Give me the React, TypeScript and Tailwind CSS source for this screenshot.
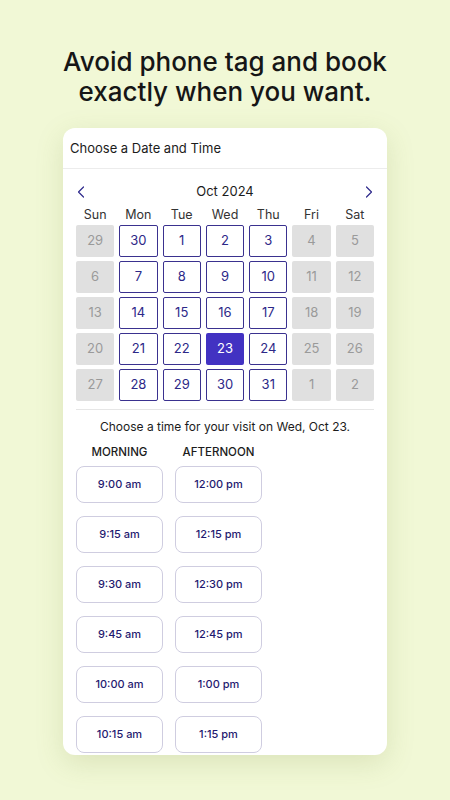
import React from 'react';

const weeks: { d: number; on: boolean }[][] = [
  [{ d: 29, on: false }, { d: 30, on: true }, { d: 1, on: true }, { d: 2, on: true }, { d: 3, on: true }, { d: 4, on: false }, { d: 5, on: false }],
  [{ d: 6, on: false }, { d: 7, on: true }, { d: 8, on: true }, { d: 9, on: true }, { d: 10, on: true }, { d: 11, on: false }, { d: 12, on: false }],
  [{ d: 13, on: false }, { d: 14, on: true }, { d: 15, on: true }, { d: 16, on: true }, { d: 17, on: true }, { d: 18, on: false }, { d: 19, on: false }],
  [{ d: 20, on: false }, { d: 21, on: true }, { d: 22, on: true }, { d: 23, on: true }, { d: 24, on: true }, { d: 25, on: false }, { d: 26, on: false }],
  [{ d: 27, on: false }, { d: 28, on: true }, { d: 29, on: true }, { d: 30, on: true }, { d: 31, on: true }, { d: 1, on: false }, { d: 2, on: false }],
];

const days = ['Sun', 'Mon', 'Tue', 'Wed', 'Thu', 'Fri', 'Sat'];

const slots: [string, string][] = [
  ['9:00 am', '12:00 pm'],
  ['9:15 am', '12:15 pm'],
  ['9:30 am', '12:30 pm'],
  ['9:45 am', '12:45 pm'],
  ['10:00 am', '1:00 pm'],
  ['10:15 am', '1:15 pm'],
];

function Chevron({ dir }: { dir: 'left' | 'right' }) {
  return (
    <svg width="8" height="12" viewBox="0 0 8 12" fill="none" className="text-[#2f2a8c]">
      <path
        d={dir === 'left' ? 'M6.5 1 L1.5 6 L6.5 11' : 'M1.5 1 L6.5 6 L1.5 11'}
        stroke="currentColor"
        strokeWidth="1.2"
        strokeLinecap="round"
        strokeLinejoin="round"
      />
    </svg>
  );
}

export default function App() {
  return (
    <div className="w-[450px] h-[800px] bg-[#f1f8d6] overflow-hidden font-['Inter',sans-serif]">
      {/* Headline */}
      <h1 className="pt-[47px] text-center text-[26px] leading-[30px] font-medium text-[#161616]">
        Avoid phone tag and book
        <br />
        exactly when you want.
      </h1>

      {/* Booking card */}
      <div className="mt-[21px] mx-[63px] bg-white rounded-[12px] shadow-[0_8px_28px_rgba(120,140,60,0.18)] overflow-hidden">
        <div className="h-[41px] flex items-center pt-[2px] px-[7px] border-b border-[#ececec]">
          <span className="text-[13px] text-[#1c1c1c]">Choose a Date and Time</span>
        </div>

        <div className="px-[13px]">
          {/* Month nav */}
          <div className="h-[22px] mt-[12px] flex items-center justify-between px-[1px]">
            <Chevron dir="left" />
            <span className="text-[13px] text-[#1c1c1c]">Oct 2024</span>
            <Chevron dir="right" />
          </div>

          {/* Day headers */}
          <div className="grid grid-cols-7 gap-x-[5px] h-[22px] mt-[1px] items-center">
            {days.map((d) => (
              <span key={d} className="text-center text-[12.5px] text-[#333]">
                {d}
              </span>
            ))}
          </div>

          {/* Dates */}
          <div className="flex flex-col gap-[4.5px] mt-[-1px]">
            {weeks.map((w, i) => (
              <div key={i} className="grid grid-cols-7 gap-x-[5px]">
                {w.map((c, j) => {
                  const selected = i === 3 && c.d === 23;
                  if (selected) {
                    return (
                      <div key={j} className="h-[31.5px] rounded-[2px] bg-[#4232c2] flex items-center justify-center text-[13px] text-white">
                        {c.d}
                      </div>
                    );
                  }
                  return c.on ? (
                    <div key={j} className="h-[31.5px] rounded-[2px] border border-[#3a318f] bg-white flex items-center justify-center text-[13px] text-[#2d2888]">
                      {c.d}
                    </div>
                  ) : (
                    <div key={j} className="h-[31.5px] rounded-[2px] bg-[#e0e0e0] flex items-center justify-center text-[13px] text-[#9a9a9a]">
                      {c.d}
                    </div>
                  );
                })}
              </div>
            ))}
          </div>

          <div className="mt-[8px] border-t border-[#e6e6e6]" />

          <p className="mt-[8px] text-center text-[12px] text-[#1c1c1c]">
            Choose a time for your visit on Wed, Oct 23.
          </p>

          {/* Time slots */}
          <div className="grid grid-cols-[87px_87px] gap-x-[12px] mt-[8px]">
            <span className="text-center text-[11.5px] font-medium text-[#1c1c1c]">MORNING</span>
            <span className="text-center text-[11.5px] font-medium text-[#1c1c1c]">AFTERNOON</span>
          </div>
          <div className="grid grid-cols-[87px_87px] gap-x-[12px] gap-y-[13px] mt-[5px] pb-[2px]">
            {slots.map(([a, b]) => (
              <React.Fragment key={a}>
                <div className="h-[37px] rounded-[8px] border border-[#cfcde0] flex items-center justify-center text-[11px] font-medium text-[#1f1a70]">
                  {a}
                </div>
                <div className="h-[37px] rounded-[8px] border border-[#cfcde0] flex items-center justify-center text-[11px] font-medium text-[#1f1a70]">
                  {b}
                </div>
              </React.Fragment>
            ))}
          </div>
        </div>
      </div>
    </div>
  );
}
